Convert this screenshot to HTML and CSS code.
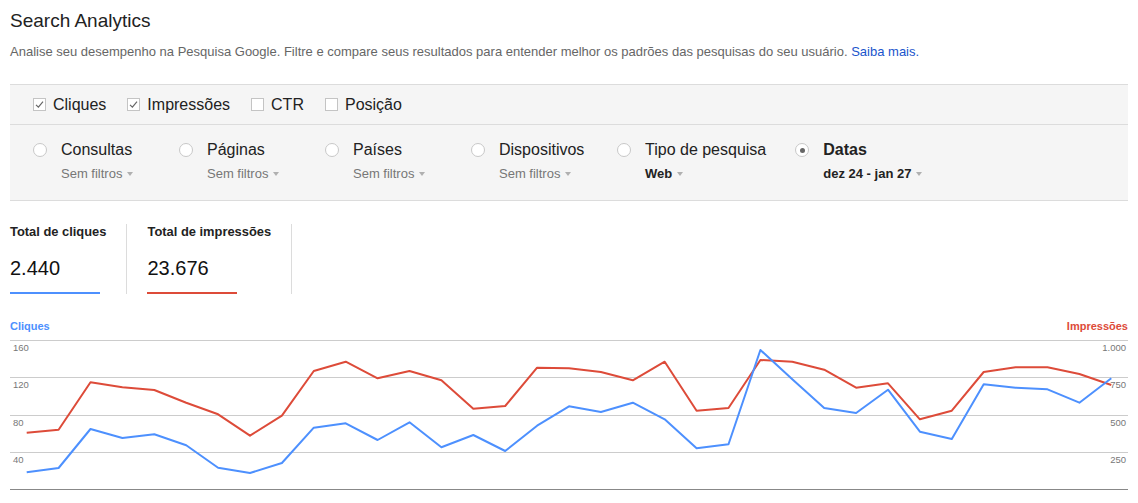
FILE: index.html
```html
<!DOCTYPE html>
<html lang="pt-BR">
<head>
<meta charset="utf-8">
<title>Search Analytics</title>
<link rel="stylesheet" href="styles.css">
</head>
<body>
<div class="page">
  <h1 class="title">Search Analytics</h1>
  <p class="desc">Analise seu desempenho na Pesquisa Google. Filtre e compare seus resultados para entender melhor os padrões das pesquisas do seu usuário. <a href="#" class="link">Saiba mais.</a></p>

  <div class="filters">
    <div class="metric-row">
      <label class="check"><span class="box"><svg viewBox="0 0 13 13" width="13" height="13"><path d="M3 6.8 L5.4 9.2 L10 3.6" fill="none" stroke="#666" stroke-width="1.2"/></svg></span>Cliques</label>
      <label class="check"><span class="box"><svg viewBox="0 0 13 13" width="13" height="13"><path d="M3 6.8 L5.4 9.2 L10 3.6" fill="none" stroke="#666" stroke-width="1.2"/></svg></span>Impressões</label>
      <label class="check"><span class="box"></span>CTR</label>
      <label class="check"><span class="box"></span>Posição</label>
    </div>
    <div class="dim-row">
      <div class="dim">
        <span class="radio"></span>
        <div class="dim-text">
          <div class="dim-name">Consultas</div>
          <div class="dim-sub">Sem filtros<span class="caret"></span></div>
        </div>
      </div>
      <div class="dim">
        <span class="radio"></span>
        <div class="dim-text">
          <div class="dim-name">Páginas</div>
          <div class="dim-sub">Sem filtros<span class="caret"></span></div>
        </div>
      </div>
      <div class="dim">
        <span class="radio"></span>
        <div class="dim-text">
          <div class="dim-name">Países</div>
          <div class="dim-sub">Sem filtros<span class="caret"></span></div>
        </div>
      </div>
      <div class="dim">
        <span class="radio"></span>
        <div class="dim-text">
          <div class="dim-name">Dispositivos</div>
          <div class="dim-sub">Sem filtros<span class="caret"></span></div>
        </div>
      </div>
      <div class="dim">
        <span class="radio"></span>
        <div class="dim-text">
          <div class="dim-name">Tipo de pesquisa</div>
          <div class="dim-sub strong">Web<span class="caret"></span></div>
        </div>
      </div>
      <div class="dim">
        <span class="radio selected"></span>
        <div class="dim-text">
          <div class="dim-name strong">Datas</div>
          <div class="dim-sub strong">dez 24 - jan 27<span class="caret"></span></div>
        </div>
      </div>
    </div>
  </div>

  <div class="totals">
    <div class="total">
      <div class="total-label">Total de cliques</div>
      <div class="total-value">2.440</div>
      <div class="total-bar bar-blue"></div>
    </div>
    <div class="total">
      <div class="total-label">Total de impressões</div>
      <div class="total-value">23.676</div>
      <div class="total-bar bar-red"></div>
    </div>
  </div>

  <div class="chart">
    <div class="legend">
      <span class="legend-left">Cliques</span>
      <span class="legend-right">Impressões</span>
    </div>
    <svg class="plot" width="1118" height="160" viewBox="0 0 1118 160">
      <g class="grid">
        <line x1="0" y1="5.5" x2="1118" y2="5.5"/>
        <line x1="0" y1="42.5" x2="1118" y2="42.5"/>
        <line x1="0" y1="80.5" x2="1118" y2="80.5"/>
        <line x1="0" y1="117.5" x2="1118" y2="117.5"/>
      </g>
      <line class="base" x1="0" y1="154.5" x2="1118" y2="154.5"/>
      <g class="axis-left">
        <text x="3" y="16">160</text>
        <text x="3" y="53">120</text>
        <text x="3" y="91">80</text>
        <text x="3" y="128">40</text>
      </g>
      <g class="axis-right">
        <text x="1116" y="16">1.000</text>
        <text x="1116" y="53">750</text>
        <text x="1116" y="91">500</text>
        <text x="1116" y="128">250</text>
      </g>
      <polyline class="line-red" points="16.7,97.7 48.6,94.7 80.5,47.3 112.4,52.3 144.3,55 176.2,67.7 208.1,79.3 240,100.7 271.9,80.7 303.8,36 335.7,26.7 367.6,43.3 399.5,36 431.4,45.3 463.3,73.7 495.2,71 527.1,32.7 559,33.3 590.9,37 622.8,45.3 654.7,26.7 686.6,75.7 718.5,73 750.4,25 782.3,26.7 814.2,34.7 846.1,52.7 878,48.3 909.9,84.3 941.8,75.7 973.7,37 1005.6,32.3 1037.5,32.3 1069.4,39 1101.3,50"/>
      <polyline class="line-blue" points="16.7,137.3 48.6,133 80.5,94 112.4,103 144.3,99.3 176.2,110.3 208.1,132.7 240,138 271.9,128 303.8,92.7 335.7,88.3 367.6,105 399.5,87.3 431.4,112.3 463.3,100 495.2,116 527.1,90.7 559,71.3 590.9,77 622.8,67.7 654.7,84.3 686.6,113.3 718.5,109.3 750.4,15 782.3,44.3 814.2,73 846.1,78 878,54.7 909.9,96.7 941.8,104 973.7,49.3 1005.6,52.7 1037.5,54.3 1069.4,67.7 1101.3,43.3"/>
    </svg>
  </div>
</div>
</body>
</html>
```

FILE: styles.css
```css
* { box-sizing: border-box; }

html, body {
  margin: 0;
  padding: 0;
  background: #fff;
}

body {
  font-family: "Liberation Sans", Arial, Helvetica, sans-serif;
  color: #222;
}

.page {
  padding: 0 10px;
}

.title {
  margin: 9px 0 0;
  font-size: 19px;
  line-height: 24px;
  font-weight: normal;
  color: #222;
}

.desc {
  margin: 11px 0 0;
  font-size: 13px;
  line-height: 16px;
  color: #666;
}

.link {
  color: #1a55cc;
  text-decoration: none;
}

.filters {
  margin-top: 24px;
  background: #f5f5f5;
  border-top: 1px solid #dcdcdc;
  border-bottom: 1px solid #dcdcdc;
}

.metric-row {
  height: 40px;
  display: flex;
  align-items: center;
  padding-left: 23px;
  border-bottom: 1px solid #dcdcdc;
}

.check {
  display: flex;
  align-items: center;
  font-size: 16px;
  line-height: 20px;
  color: #222;
  margin-right: 21px;
}

.box {
  width: 13px;
  height: 13px;
  margin-right: 7px;
  background: #fff;
  border: 1px solid #c4c4c4;
  display: flex;
  align-items: center;
  justify-content: center;
  position: relative;
}

.box svg {
  display: block;
  flex: none;
}

.dim-row {
  display: flex;
  height: 75px;
  padding: 15px 0 0 23px;
}

.dim {
  display: flex;
  align-items: flex-start;
  min-width: 117px;
  margin-right: 29px;
}

.radio {
  flex: none;
  width: 14px;
  height: 14px;
  margin-top: 3px;
  margin-right: 14px;
  border-radius: 50%;
  background: #fff;
  border: 1px solid #c8c8c8;
  display: flex;
  align-items: center;
  justify-content: center;
}

.radio.selected::after {
  content: "";
  width: 5px;
  height: 5px;
  border-radius: 50%;
  background: #666;
}

.dim-name {
  font-size: 16px;
  line-height: 20px;
  color: #222;
  white-space: nowrap;
}

.dim-sub {
  margin-top: 6px;
  font-size: 13px;
  line-height: 16px;
  color: #777;
  white-space: nowrap;
  display: flex;
  align-items: center;
}

.strong {
  font-weight: bold;
  color: #222;
}

.caret {
  display: inline-block;
  margin-left: 5px;
  width: 0;
  height: 0;
  border-left: 3.5px solid transparent;
  border-right: 3.5px solid transparent;
  border-top: 4px solid #b0b0b0;
}

.totals {
  display: flex;
  margin-top: 23px;
}

.total {
  height: 70px;
  padding: 0 20px;
  border-right: 1px solid #dcdcdc;
  display: flex;
  flex-direction: column;
}

.total:first-child {
  padding-left: 0;
}

.total-label {
  font-size: 12.9px;
  line-height: 15px;
  font-weight: bold;
  color: #222;
  white-space: nowrap;
}

.total-value {
  margin-top: 17px;
  font-size: 20px;
  line-height: 24px;
  color: #111;
}

.total-bar {
  margin-top: 12px;
  width: 90px;
  height: 2px;
}

.bar-blue { background: #4d90fe; }
.bar-red { background: #dd4b39; }

.chart {
  margin-top: 25px;
}

.legend {
  display: flex;
  justify-content: space-between;
  font-size: 11px;
  line-height: 14px;
  font-weight: bold;
  height: 14px;
  margin-bottom: 2px;
}

.legend-left { color: #4d90fe; }
.legend-right { color: #dd4b39; }

.plot {
  display: block;
}

.grid line {
  stroke: #cccccc;
  stroke-width: 1;
}

.base {
  stroke: #888;
  stroke-width: 1;
}

.axis-left text,
.axis-right text {
  font-family: "Liberation Sans", Arial, sans-serif;
  font-size: 9.5px;
  fill: #777;
}

.axis-right text {
  text-anchor: end;
}

.line-red,
.line-blue {
  fill: none;
  stroke-width: 2;
  stroke-linejoin: round;
}

.line-red { stroke: #dd4b39; }
.line-blue { stroke: #4d90fe; }
```
